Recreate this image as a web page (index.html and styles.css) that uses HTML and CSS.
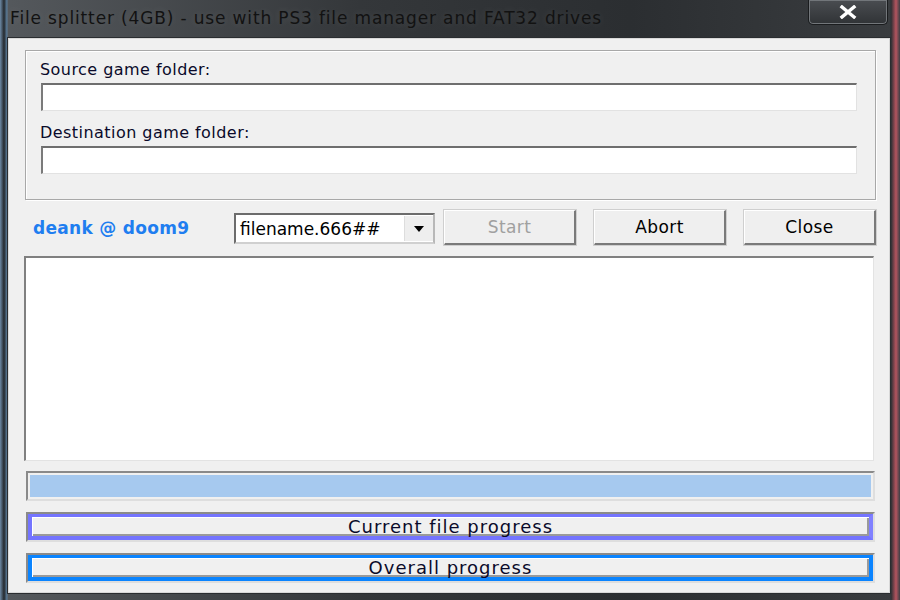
FILE: index.html
```html
<!DOCTYPE html>
<html lang="en">
<head>
  <meta charset="UTF-8">
  <title>File splitter (4GB)</title>
  <link rel="stylesheet" href="styles.css">
</head>
<body>
  <div class="window">
    <div class="titlebar">
      <span class="title">File splitter (4GB) - use with PS3 file manager and FAT32 drives</span>
      <button class="close-x">
        <svg width="18" height="14" viewBox="0 0 18 14"><path d="M3 2 L15 12 M15 2 L3 12" stroke="#fff" stroke-width="3.4" stroke-linecap="square"/></svg>
      </button>
    </div>

    <div class="client">
      <div class="group">
        <label>Source game folder:</label>
        <div class="field"></div>
        <label>Destination game folder:</label>
        <div class="field"></div>
      </div>

      <div class="toolbar">
        <span class="credit">deank @ doom9</span>
        <div class="combo">
          <span>filename.666##</span>
          <span class="arrow"><svg width="12" height="8" viewBox="0 0 12 8"><path d="M1 1 L11 1 L6 7 Z" fill="#000"/></svg></span>
        </div>
        <button class="btn disabled">Start</button>
        <button class="btn">Abort</button>
        <button class="btn">Close</button>
      </div>

      <div class="log"></div>

      <div class="bar fill"><div></div></div>
      <div class="bar current"><div>Current file progress</div></div>
      <div class="bar overall"><div>Overall progress</div></div>
    </div>
  </div>
</body>
</html>
```

FILE: styles.css
```css
html, body {
  margin: 0;
  height: 100%;
}

body {
  background:
    linear-gradient(to right, #6d8aa6 0, #24282c 4px, #5c7e9c 7px, transparent 8px),
    linear-gradient(to left, #3a3e44 0, #b5545f 4px, #2c2f33 9px, transparent 10px),
    linear-gradient(to right, #55595d 0, #34373a 40%, #2b2e31 70%, #3a3d40 100%);
  font-family: "DejaVu Sans", Verdana, sans-serif;
  overflow: hidden;
}

.window {
  height: 600px;
  display: flex;
  flex-direction: column;
}

.titlebar {
  height: 38px;
  flex: none;
  display: flex;
  justify-content: space-between;
  align-items: flex-start;
  padding-left: 10px;
  padding-right: 12px;
}

.title {
  color: #121212;
  font-size: 17px;
  letter-spacing: 0.85px;
  margin-top: 8px;
  text-shadow: 0 0 8px rgba(255, 255, 255, 0.12);
}

.close-x {
  width: 80px;
  height: 25px;
  margin: 0;
  padding: 0;
  background: linear-gradient(#4a4d51, #303336);
  border: 1px solid #1a1c1e;
  border-top: none;
  border-radius: 0 0 5px 5px;
  box-shadow: inset 0 0 0 1px #72767a;
  display: flex;
  align-items: center;
  justify-content: center;
}

.client {
  flex: 1;
  margin: 0 10px 7px 8px;
  background: #f0f0f0;
  border: 1px solid #d8d8d8;
  box-shadow: 0 0 0 1px #2a2d30;
  padding: 11px 13px 0 15px;
  display: flex;
  flex-direction: column;
}

.group {
  height: 150px;
  flex: none;
  margin: 0 0 0 1px;
  border: 1px solid #a8a8a8;
  box-shadow: inset 1px 1px 0 #fff, 1px 1px 0 #fff;
  padding: 8px 18px 0 14px;
  display: flex;
  flex-direction: column;
  box-sizing: border-box;
}

.group label {
  font-size: 16px;
  letter-spacing: 0.45px;
  color: #0a0a2a;
  height: 24px;
  line-height: 22px;
}

.field {
  height: 28px;
  background: #fff;
  margin: 0 0 11px 1px;
  border-top: 2px solid #6e6e6e;
  border-left: 2px solid #7a7a7a;
  border-right: 1px solid #e2e2e2;
  border-bottom: 1px solid #e2e2e2;
  box-sizing: border-box;
}

.toolbar {
  height: 35px;
  flex: none;
  margin-top: 10px;
  display: flex;
  align-items: center;
}

.credit {
  width: 210px;
  padding-left: 9px;
  color: #1f7ef0;
  font-weight: bold;
  font-size: 17px;
  letter-spacing: 0.3px;
  box-sizing: border-box;
}

.combo {
  width: 201px;
  height: 31px;
  margin-top: 2px;
  box-sizing: border-box;
  background: #fff;
  border-top: 2px solid #6c6c6c;
  border-left: 2px solid #6c6c6c;
  border-right: 2px solid #b8b8b8;
  border-bottom: 2px solid #d0d0d0;
  display: flex;
  align-items: center;
  justify-content: space-between;
  font-size: 17px;
  color: #000;
  padding-left: 4px;
}

.arrow {
  width: 28px;
  height: 25px;
  background: #eeeeee;
  border-left: 1px solid #ddd;
  display: flex;
  align-items: center;
  justify-content: center;
}

.btn {
  width: 132px;
  height: 35px;
  margin-left: 9px;
  background: #efefef;
  border-top: 1px solid #fff;
  border-left: 1px solid #fff;
  border-right: 2px solid #7a7a7a;
  border-bottom: 2px solid #7a7a7a;
  box-shadow: 0 0 0 1px #cfcfcf;
  font-family: "DejaVu Sans", Verdana, sans-serif;
  font-size: 17px;
  letter-spacing: 0.4px;
  color: #000;
}

.btn + .btn {
  margin-left: 18px;
}

.btn.disabled {
  color: #a0a0a0;
}

.log {
  height: 205px;
  flex: none;
  margin: 11px 2px 10px 0;
  background: #fff;
  border-top: 2px solid #808080;
  border-left: 2px solid #808080;
  border-right: 1px solid #e3e3e3;
  border-bottom: 1px solid #e3e3e3;
  box-sizing: border-box;
}

.bar {
  height: 30px;
  flex: none;
  margin: 0 1px 11px 2px;
  border: 2px solid #8a8a8a;
  border-right-color: #dedede;
  border-bottom-color: #dedede;
  box-sizing: border-box;
  display: flex;
}

.bar div {
  flex: 1;
  display: flex;
  align-items: center;
  justify-content: center;
  font-size: 18px;
  letter-spacing: 1px;
  color: #0a0a2a;
  background: #f0f0f0;
}

.fill div {
  background: #a6c9ef;
  margin: 2px;
}

.current div {
  border: 4px solid #7474ff;
  border-top-width: 3px;
  border-right-color: #8080ff;
  box-shadow: inset 1px 1px 0 #fff, inset -2px -2px 0 #9a9a9a;
}

.overall {
  margin-bottom: 0;
}

.overall div {
  border: 4px solid #0a84ff;
  border-top-width: 3px;
  box-shadow: inset 1px 1px 0 #fff, inset -2px -2px 0 #9a9a9a;
}
```
